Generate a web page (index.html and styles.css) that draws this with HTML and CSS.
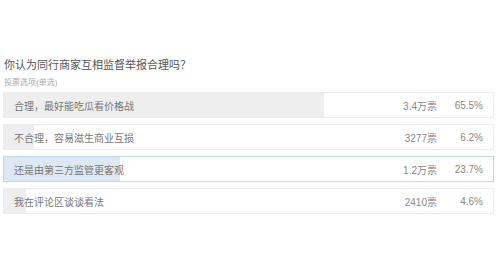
FILE: index.html
```html
<!DOCTYPE html>
<html lang="zh-CN">

<head>
    <meta charset="UTF-8">
    <meta name="viewport" content="width=device-width, initial-scale=1.0">
    <title>投票</title>
    <link rel="stylesheet" href="styles.css">
</head>

<body>
    <div class="poll">
        <h1 class="poll-title">你认为同行商家互相监督举报合理吗？</h1>
        <div class="poll-type">投票选项(单选)</div>
        <ul class="options">
            <li class="option" style="--pct: 65.5%">
                <span class="option-text">合理，最好能吃瓜看价格战</span>
                <span class="votes">3.4万票</span>
                <span class="percent">65.5%</span>
            </li>
            <li class="option" style="--pct: 6.2%">
                <span class="option-text">不合理，容易滋生商业互损</span>
                <span class="votes">3277票</span>
                <span class="percent">6.2%</span>
            </li>
            <li class="option selected" style="--pct: 23.7%">
                <span class="option-text">还是由第三方监管更客观</span>
                <span class="votes">1.2万票</span>
                <span class="percent">23.7%</span>
            </li>
            <li class="option" style="--pct: 4.6%">
                <span class="option-text">我在评论区谈谈看法</span>
                <span class="votes">2410票</span>
                <span class="percent">4.6%</span>
            </li>
        </ul>
    </div>
</body>

</html>
```

FILE: styles.css
```css
body {
    font-family: "Liberation Sans", "Noto Sans CJK SC", sans-serif;
    background-color: #ffffff;
    margin: 0;
    padding: 0;
}

.poll {
    padding: 57px 6px 0 3px;
}

.poll-title {
    margin: 0 0 0 1px;
    font-size: 11px;
    line-height: 16px;
    font-weight: normal;
    color: #555;
}

.poll-type {
    margin: 4px 0 0 1px;
    font-size: 8px;
    line-height: 12px;
    color: #aaa;
}

.options {
    list-style: none;
    margin: 3px 0 0;
    padding: 0;
}

.option {
    --fill: #eeeeee;
    --edge: #ebebeb;
    display: flex;
    align-items: center;
    height: 26px;
    margin-bottom: 6px;
    padding: 0 10px 0 10px;
    border: 1px solid var(--edge);
    box-sizing: border-box;
    background: linear-gradient(to right, var(--fill) var(--pct), #ffffff var(--pct));
    font-size: 10px;
    color: #777;
}

.option.selected {
    --fill: #dde8f4;
    --edge: #bcd7ee;
}

.option-text {
    flex: 1;
    color: #777;
}

.votes {
    margin-right: 6px;
    text-align: right;
    color: #888;
}

.percent {
    width: 40px;
    text-align: right;
    color: #888;
}
```
